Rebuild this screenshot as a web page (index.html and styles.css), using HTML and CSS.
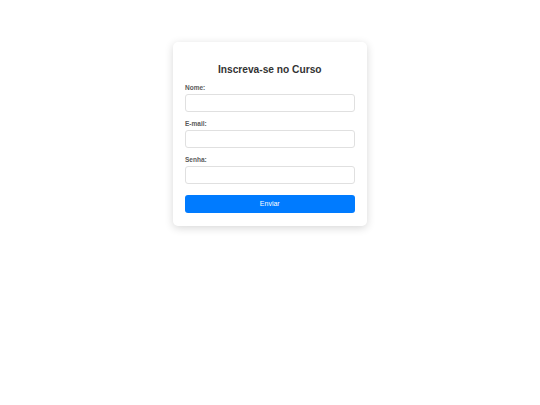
FILE: index.html
```html
<!DOCTYPE html>
<html lang="pt">
<head>
<meta charset="utf-8">
<title>Inscreva-se no Curso</title>
<link rel="stylesheet" href="styles.css">
</head>
<body>
<main class="page">
  <form class="card">
    <h2 class="title">Inscreva-se no Curso</h2>
    <div class="field">
      <label class="label" for="nome">Nome:</label>
      <input class="input" id="nome" type="text">
    </div>
    <div class="field">
      <label class="label" for="email">E-mail:</label>
      <input class="input" id="email" type="email">
    </div>
    <div class="field">
      <label class="label" for="senha">Senha:</label>
      <input class="input" id="senha" type="password">
    </div>
    <button class="button" type="button">Enviar</button>
  </form>
</main>
</body>
</html>
```
FILE: styles.css
```css
html, body {
  margin: 0;
  padding: 0;
  background: #ffffff;
  font-family: "Liberation Sans", Arial, sans-serif;
}

.page {
  display: flex;
  justify-content: center;
  padding: 42px 0 40px 0;
}

.card {
  box-sizing: border-box;
  width: 194px;
  background: #ffffff;
  border-radius: 5px;
  box-shadow: 0 2px 9px rgba(0, 0, 0, 0.16);
  padding: 12px 12.5px 13px 12px;
  display: flex;
  flex-direction: column;
}

.title {
  margin: 9.5px 0 8.5px 0;
  font-size: 10.2px;
  line-height: 11.5px;
  font-weight: bold;
  color: #333333;
  text-align: center;
}

.field {
  display: flex;
  flex-direction: column;
  margin-bottom: 7.5px;
}

.label {
  font-size: 6.5px;
  line-height: 7.5px;
  font-weight: bold;
  color: #5a5a5a;
  margin-bottom: 3px;
}

.input {
  box-sizing: border-box;
  height: 18px;
  width: 100%;
  margin: 0;
  padding: 0 4px;
  border: 1px solid #e0e0e0;
  border-radius: 3px;
  background: #ffffff;
  font-size: 7px;
}

.button {
  box-sizing: border-box;
  height: 18px;
  margin-top: 3px;
  width: 100%;
  border: none;
  border-radius: 3px;
  background: #007bff;
  color: #ffffff;
  font-family: "Liberation Sans", Arial, sans-serif;
  font-size: 7px;
  padding: 0;
}
```
